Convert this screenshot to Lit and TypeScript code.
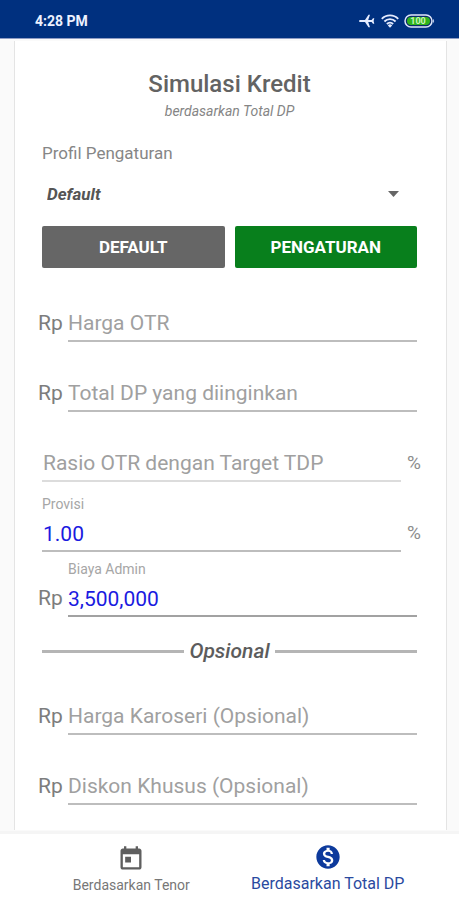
import { LitElement, html, css, svg, nothing } from "lit";
import { customElement, property, state } from "lit/decorators.js";
import { classMap } from "lit/directives/class-map.js";

@customElement("status-bar")
class StatusBar extends LitElement {
  static styles = css`
    :host {
      display: flex;
      align-items: center;
      justify-content: space-between;
      box-sizing: border-box;
      height: 39px;
      padding: 4px 24px 0 35px;
      background: #00307f;
      border-bottom: 1px solid #8f9cc4;
      color: #eef2ff;
    }
    .time {
      font-size: 14px;
      font-weight: 700;
      line-height: 20px;
    }
    .icons {
      display: flex;
      align-items: center;
      gap: 5px;
    }
    svg {
      display: block;
    }
    .battery-text {
      font-size: 9px;
      font-weight: 700;
      fill: #c9f5b8;
    }
  `;

  render() {
    return html`
      <span class="time">4:28 PM</span>
      <span class="icons">
        <svg width="18" height="14" viewBox="0 0 18 14" fill="#e6ecff" aria-hidden="true">
          <path d="M1 7c0-.7.7-1.100 1.500-1.100H7L10.500 .8H12l-1.800 5.100h3.400L15 4.200h1.300L15.600 7l.7 2.800H15l-1.400-1.700h-3.400L12 13.200h-1.500L7 8.100H2.500C1.700 8.100 1 7.700 1 7z" />
        </svg>
        <svg width="18" height="14" viewBox="0 0 18 14" fill="none" stroke="#e6ecff" stroke-width="1.900" aria-hidden="true">
          <path d="M.8 4.800a11.600 11.600 0 0 1 16.400 0" />
          <path d="M3.400 7.500a7.900 7.900 0 0 1 11.200 0" />
          <path d="M5.900 10a4.400 4.400 0 0 1 6.200 0" />
          <path d="M9 13.800l-2.200-2.400a3 3 0 0 1 4.400 0z" fill="#e6ecff" stroke="none" />
        </svg>
        <svg width="31" height="14" viewBox="0 0 31 14" aria-hidden="true">
          <rect x="1" y="1" width="27" height="12" rx="6" fill="#0a2a6a" stroke="#dfe6fb" stroke-width="1.500" />
          <rect x="3" y="3" width="23" height="8" rx="4" fill="#2fb31c" />
          <path d="M29.200 5c1.200.8 1.200 3.200 0 4z" fill="#dfe6fb" />
          <text class="battery-text" x="14" y="10" text-anchor="middle">100</text>
        </svg>
      </span>
    `;
  }
}

@customElement("form-field")
class FormField extends LitElement {
  @property() label = "";
  @property() value = "";
  @property() prefixText = "";
  @property() suffixText = "";
  @property() tone = "medium";
  @property({ type: Boolean }) compact = false;

  static styles = css`
    :host {
      display: block;
    }
    .field {
      display: grid;
      grid-template-columns: 1fr;
      grid-template-rows: 16px 36px;
      row-gap: 4px;
      padding-top: 14px;
    }
    .compact {
      padding-top: 9px;
    }
    .prefixed {
      grid-template-columns: 30px 1fr;
      margin-left: -4px;
    }
    .suffixed {
      grid-template-columns: 1fr 20px;
      margin-right: -4px;
    }
    .caption {
      grid-row: 1;
      grid-column: 1;
      font-size: 14px;
      line-height: 16px;
      color: #a6a6a6;
    }
    .prefixed .caption,
    .prefixed .control {
      grid-column: 2;
    }
    .affix {
      grid-row: 2;
      font-size: 21px;
      line-height: 34px;
      color: #7d7d7d;
    }
    .suffix {
      font-size: 19px;
      text-align: right;
      color: #8c8c8c;
    }
    .control {
      grid-row: 2;
      grid-column: 1;
      box-sizing: border-box;
      width: 100%;
      min-width: 0;
      height: 36px;
      margin: 0;
      padding: 0;
      border: 0;
      border-bottom: 2px solid #bdbdbd;
      border-radius: 0;
      outline: none;
      background: transparent;
      font: inherit;
      font-size: 21px;
      color: #1a1ae0;
    }
    .filled .control {
      padding-top: 2px;
    }
    .suffixed .control {
      padding-left: 1px;
    }
    .control::placeholder {
      color: #a0a0a0;
      opacity: 1;
    }
    .light {
      border-bottom-color: #dcdcdc;
    }
    .dark {
      border-bottom-color: #a2a2a2;
    }
  `;

  render() {
    const filled = this.value !== "";
    return html`
      <div
        class=${classMap({
          field: true,
          filled,
          compact: this.compact,
          prefixed: !!this.prefixText,
          suffixed: !!this.suffixText,
        })}
      >
        ${filled ? html`<label class="caption" for="control">${this.label}</label>` : nothing}
        ${this.prefixText ? html`<span class="affix">${this.prefixText}</span>` : nothing}
        <input
          id="control"
          class="control ${this.tone}"
          type="text"
          inputmode="decimal"
          aria-label=${filled ? nothing : this.label}
          placeholder=${this.label}
          .value=${this.value}
        />
        ${this.suffixText ? html`<span class="affix suffix">${this.suffixText}</span>` : nothing}
      </div>
    `;
  }
}

const calendarIcon = svg`
  <svg width="28" height="28" viewBox="0 0 24 24" fill="#5f5f5f" aria-hidden="true">
    <path d="M19 3h-1V1h-2v2H8V1H6v2H5c-1.110 0-1.990.9-1.990 2L3 19c0 1.100.89 2 2 2h14c1.100 0 2-.9 2-2V5c0-1.100-.9-2-2-2zm0 16H5V8h14v11zM7 10h5v5H7z" />
  </svg>`;

const moneyIcon = svg`
  <svg width="28" height="28" viewBox="0 0 24 24" fill="#0d3a9c" aria-hidden="true">
    <path d="M12 2C6.480 2 2 6.480 2 12s4.480 10 10 10 10-4.480 10-10S17.520 2 12 2zm1.410 16.090V20h-2.670v-1.930c-1.710-.36-3.160-1.460-3.270-3.400h1.960c.1 1.050.82 1.870 2.650 1.870 1.960 0 2.400-.98 2.400-1.590 0-.83-.44-1.610-2.670-2.140-2.480-.6-4.180-1.620-4.180-3.670 0-1.720 1.390-2.840 3.110-3.210V4h2.670v1.950c1.860.45 2.790 1.860 2.850 3.390H14.300c-.05-1.110-.64-1.870-2.220-1.870-1.500 0-2.400.68-2.400 1.640 0 .84.65 1.390 2.670 1.910s4.180 1.390 4.180 3.910c-.01 1.830-1.380 2.830-3.120 3.160z" />
  </svg>`;

@customElement("app-root")
class AppRoot extends LitElement {
  @state() private tab = "total";

  static styles = css`
    :host {
      display: flex;
      flex-direction: column;
      min-height: 100vh;
      background: #fafafa;
      font-family: Roboto, "Liberation Sans", sans-serif;
      color: #636363;
    }
    .card {
      flex: 1;
      margin: 2px 12px 1px 14px;
      padding: 29px 29px 23px 27px;
      background: #fff;
      border: 1px solid #e4e4e4;
      border-top: 0;
      border-bottom: 0;
    }
    .title {
      margin: 0;
      font-size: 24px;
      font-weight: 500;
      line-height: 28px;
      text-align: center;
    }
    .subtitle {
      margin: 4px 0 0;
      font-size: 14px;
      font-style: italic;
      line-height: 18px;
      text-align: center;
      color: #858585;
    }
    .profile-label {
      display: block;
      margin-top: 22px;
      font-size: 17px;
      line-height: 22px;
      color: #868686;
    }
    .picker {
      display: grid;
      align-items: center;
      margin-top: 12px;
    }
    .picker > * {
      grid-area: 1 / 1;
    }
    .select {
      appearance: none;
      width: 100%;
      height: 36px;
      margin: 0;
      padding: 0 5px;
      border: 0;
      background: transparent;
      font: inherit;
      font-size: 17px;
      font-style: italic;
      font-weight: 700;
      color: #555;
    }
    .arrow {
      justify-self: end;
      margin-right: 18px;
      pointer-events: none;
    }
    .actions {
      display: grid;
      grid-template-columns: 1fr 1fr;
      gap: 10px;
      margin-top: 14px;
      margin-bottom: 4px;
    }
    .action {
      height: 42px;
      padding: 0;
      border: 0;
      border-radius: 2px;
      background: #666;
      font: inherit;
      font-size: 17px;
      font-weight: 700;
      color: #fff;
    }
    .primary {
      background: #087f1c;
    }
    .divider {
      display: flex;
      align-items: center;
      gap: 5px;
      margin: 20px 0 0;
      font-size: 21px;
      font-style: italic;
      font-weight: 500;
      line-height: 28px;
      color: #5c5c5c;
    }
    .divider::before,
    .divider::after {
      content: "";
      flex: 1;
      height: 3px;
      background: #b5b5b5;
    }
    .heading {
      margin: 0;
      font: inherit;
    }
    .tabs {
      position: sticky;
      bottom: 0;
      display: grid;
      grid-template-columns: 1fr 1fr;
      height: 66px;
      padding: 0 33px;
      background: #fff;
      border-top: 3px solid #f5f5f5;
    }
    .tab {
      display: flex;
      flex-direction: column;
      align-items: center;
      padding: 11px 0 0;
      border: 0;
      background: transparent;
      font: inherit;
      font-size: 14px;
      line-height: 24px;
      white-space: nowrap;
      color: #777;
    }
    .active {
      padding-top: 9px;
      font-size: 16px;
      line-height: 26px;
      color: #2a4a9f;
    }
  `;

  render() {
    return html`
      <status-bar></status-bar>
      <main class="card">
        <h1 class="title">Simulasi Kredit</h1>
        <p class="subtitle">berdasarkan Total DP</p>
        <label class="profile-label" for="profile">Profil Pengaturan</label>
        <div class="picker">
          <select id="profile" class="select">
            <option>Default</option>
          </select>
          <svg class="arrow" width="11" height="6" viewBox="0 0 11 6" fill="#666" aria-hidden="true">
            <path d="M0 0h11L5.500 6z" />
          </svg>
        </div>
        <div class="actions">
          <button class="action" type="button">DEFAULT</button>
          <button class="action primary" type="button">PENGATURAN</button>
        </div>
        <form-field label="Harga OTR" prefixText="Rp"></form-field>
        <form-field label="Total DP yang diinginkan" prefixText="Rp"></form-field>
        <form-field label="Rasio OTR dengan Target TDP" suffixText="%" tone="light"></form-field>
        <form-field label="Provisi" value="1.00" suffixText="%"></form-field>
        <form-field label="Biaya Admin" value="3,500,000" prefixText="Rp" tone="dark" compact></form-field>
        <div class="divider"><h2 class="heading">Opsional</h2></div>
        <form-field label="Harga Karoseri (Opsional)" prefixText="Rp"></form-field>
        <form-field label="Diskon Khusus (Opsional)" prefixText="Rp"></form-field>
      </main>
      <nav class="tabs">
        <button
          type="button"
          class=${classMap({ tab: true, active: this.tab === "tenor" })}
          @click=${() => (this.tab = "tenor")}
        >
          ${calendarIcon}<span>Berdasarkan Tenor</span>
        </button>
        <button
          type="button"
          class=${classMap({ tab: true, active: this.tab === "total" })}
          @click=${() => (this.tab = "total")}
        >
          ${moneyIcon}<span>Berdasarkan Total DP</span>
        </button>
      </nav>
    `;
  }
}
